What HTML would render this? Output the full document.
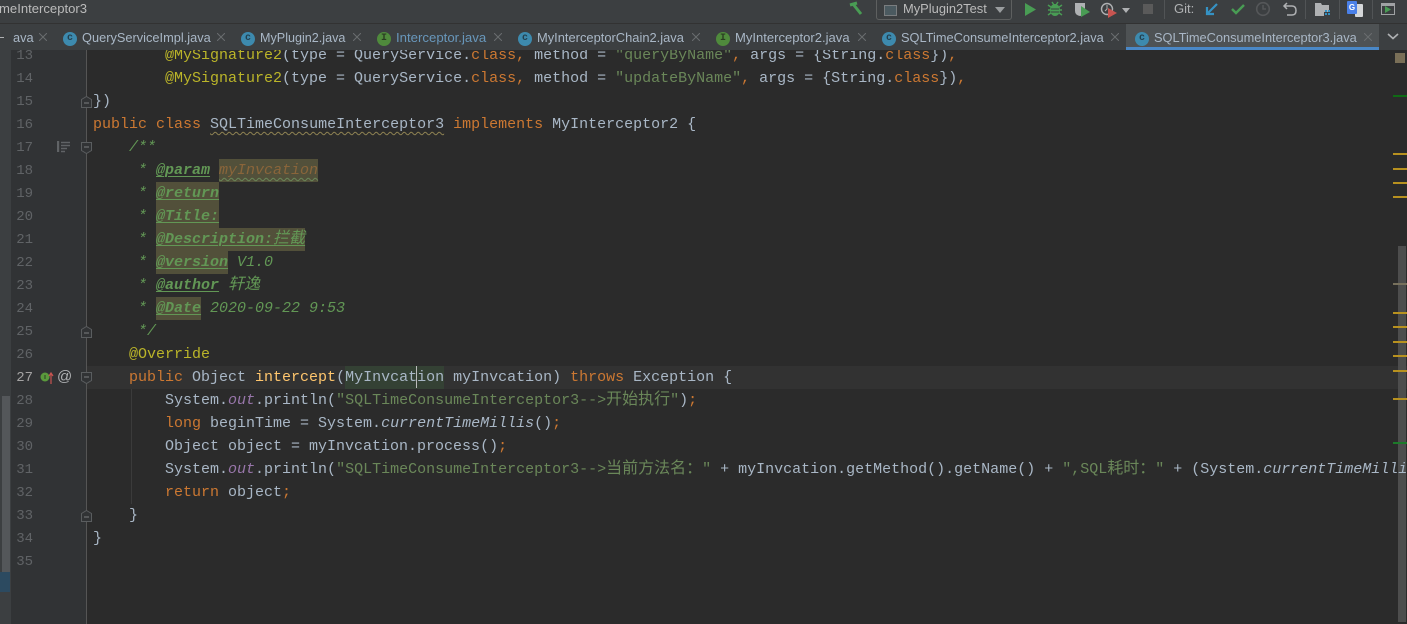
<!DOCTYPE html>
<html><head><meta charset="utf-8"><style>
html,body{margin:0;padding:0;width:1407px;height:624px;overflow:hidden;background:#2b2b2b}
body{position:relative}
.a{position:absolute}
#top{left:0;top:0;width:1407px;height:23px;background:#3c3f41;border-bottom:1px solid #323232}
#tabs{left:0;top:24px;width:1407px;height:26px;background:#3c3f41;z-index:5}
.t{position:absolute;top:5px;font:12.8px/18px "Liberation Sans",sans-serif;color:#a9b7c6;white-space:nowrap}
.ic{position:absolute;top:8px;width:14px;height:14px;border-radius:50%;background:#3d8aae;color:#23404f;font:bold 10px/13px "Liberation Mono",monospace;text-align:center}
.ic.i{background:#4f8a3c;color:#2b3d22}
.x{position:absolute;top:9px;width:8px;height:8px}
#ed{left:0;top:0;width:1407px;height:624px;overflow:hidden;z-index:1}
.l{position:absolute;left:93px;height:23px;white-space:pre;font:15px/23px "Liberation Mono",monospace;color:#a9b7c6}
.n{position:absolute;left:13px;margin-top:1px;width:20px;text-align:right;height:23px;font:14px/23px "Liberation Mono",monospace;color:#606366}
.k{color:#cc7832}.s{color:#6a8759}.an{color:#bbb529}.m{color:#ffc66d}
.d{color:#629755;font-style:italic}
.tag{font-weight:bold;text-decoration:underline;text-underline-offset:2px;text-decoration-thickness:1px}
.hl{background:#52503a;display:inline-block;height:23px;vertical-align:top}
.f{color:#9876aa;font-style:italic}.it{font-style:italic}
.c{font-family:"Noto Sans CJK SC","Liberation Sans",sans-serif;font-size:16px;line-height:0;font-weight:normal}
.w{text-decoration:underline wavy #6a8759 1px;text-underline-offset:3px}
.w2{text-decoration:underline wavy #8f8352 1px;text-underline-offset:3px}
.mk{position:absolute;left:1393px;width:14px;height:2px;background:#b8911f;z-index:4}
svg{position:absolute}
svg.fo{left:81px;z-index:3}
</style></head><body>
<div class="a" id="top">
<div class="a" style="left:-1px;top:0;font:13.1px/18px 'Liberation Sans',sans-serif;color:#bbb">meInterceptor3</div>
<svg style="left:848px;top:1px" width="18" height="16" viewBox="0 0 18 16"><path d="M2 4 L9 2 M5 3 L13 13" stroke="#499c54" stroke-width="3" fill="none"/></svg>
<div class="a" style="left:876px;top:-2px;width:134px;height:20px;border:1px solid #5e6060;border-radius:3px"></div>
<div class="a" style="left:884px;top:5px;width:11px;height:9px;border:1px solid #7a7d7f;background:#4b5a60"></div>
<div class="a" style="left:903px;top:0;font:12.9px/18px 'Liberation Sans',sans-serif;color:#bbb">MyPlugin2Test</div>
<div class="a" style="left:995px;top:7px;border:5px solid transparent;border-top:6px solid #9a9d9f"></div>
<svg style="left:1023px;top:2px" width="16" height="15"><path d="M2 1 L13 7.500 L2 14Z" fill="#499c54"/></svg>
<svg style="left:1047px;top:1px" width="16" height="16"><ellipse cx="8" cy="9" rx="5" ry="6" fill="#499c54"/><path d="M1 4 L15 14 M15 4 L1 14 M1 9H15 M5 1 L7 4 M11 1 L9 4" stroke="#499c54" stroke-width="1.4"/><path d="M4 8H12M4 11H12" stroke="#3c3f41"/></svg>
<svg style="left:1074px;top:2px" width="17" height="16"><path d="M1 1H11V9Q11 13 6 14Q1 13 1 9Z" fill="#afb1b3"/><path d="M7 4 L16 10 L7 15Z" fill="#499c54"/></svg>
<svg style="left:1100px;top:2px" width="18" height="16"><circle cx="7" cy="7" r="5.500" fill="none" stroke="#afb1b3" stroke-width="1.4"/><path d="M7 3V7L5 9" stroke="#afb1b3" fill="none"/><path d="M8 6 L17 11 L8 16Z" fill="#c75450"/></svg>
<div class="a" style="left:1122px;top:8px;border:4px solid transparent;border-top:5px solid #afb1b3"></div>
<div class="a" style="left:1143px;top:4px;width:10px;height:10px;background:#5a5a5a"></div>
<div class="a" style="left:1164px;top:0;width:1px;height:19px;background:#515456"></div>
<div class="a" style="left:1174px;top:0;font:13px/18px 'Liberation Sans',sans-serif;color:#afb1b3">Git:</div>
<svg style="left:1204px;top:2px" width="15" height="15"><path d="M13 2 L3 12 M3 5V12H10" stroke="#3592c4" stroke-width="2.200" fill="none"/></svg>
<svg style="left:1230px;top:3px" width="16" height="13"><path d="M2 6 L6 10 L14 2" stroke="#499c54" stroke-width="2.400" fill="none"/></svg>
<svg style="left:1255px;top:1px" width="16" height="16"><circle cx="8" cy="8" r="6.300" fill="none" stroke="#555759" stroke-width="1.600"/><path d="M8 4V8H11" stroke="#555759" fill="none" stroke-width="1.400"/></svg>
<svg style="left:1282px;top:2px" width="16" height="15"><path d="M5 1 L2 4 L5 7 M2 4H10Q14 4 14 8.500Q14 13 10 13H5" stroke="#afb1b3" stroke-width="1.500" fill="none"/></svg>
<div class="a" style="left:1305px;top:0;width:1px;height:19px;background:#515456"></div>
<svg style="left:1315px;top:3px" width="16" height="14"><path d="M0 0H6L7 2H14V9H9V13H0Z" fill="#afb1b3"/><path d="M10 7h2v2h-2zM13 7h2v2h-2zM10 10h2v2h-2zM13 10h2v2h-2z" fill="#3592c4"/></svg>
<div class="a" style="left:1339px;top:0;width:1px;height:19px;background:#515456"></div>
<div class="a" style="left:1355px;top:4px;width:8px;height:13px;background:#d5d7d9;border-radius:1px"></div>
<div class="a" style="left:1347px;top:1px;width:10px;height:13px;background:#4a80e8;border-radius:1px;color:#fff;font:bold 8px/13px 'Liberation Sans',sans-serif;text-align:center">G</div>
<div class="a" style="left:1372px;top:0;width:1px;height:19px;background:#515456"></div>
<div class="a" style="left:1381px;top:3px;width:12px;height:8px;border:1px solid #a0a2a4;border-top-width:3px"></div>
<svg style="left:1385px;top:6px" width="8" height="8"><path d="M0 0L6 3.500L0 7Z" fill="#499c54"/></svg>
</div>
<div class="a" id="tabs">
<div class="a" style="left:0;top:13px;width:4px;height:1px;background:#afb1b3"></div>
<div class="t" style="left:13px">ava</div>
<svg class="x" style="left:39px"><path d="M0 0L8 8M8 0L0 8" stroke="#6a6d6f"/></svg>
<div class="ic" style="left:63px">c</div><div class="t" style="left:82px">QueryServiceImpl.java</div>
<svg class="x" style="left:217px"><path d="M0 0L8 8M8 0L0 8" stroke="#6a6d6f"/></svg>
<div class="ic" style="left:241px">c</div><div class="t" style="left:260px;font-size:12.600px">MyPlugin2.java</div>
<svg class="x" style="left:353px"><path d="M0 0L8 8M8 0L0 8" stroke="#6a6d6f"/></svg>
<div class="ic i" style="left:377px">I</div><div class="t" style="left:396px;color:#6897bb;font-size:13.200px">Interceptor.java</div>
<svg class="x" style="left:494px"><path d="M0 0L8 8M8 0L0 8" stroke="#6a6d6f"/></svg>
<div class="ic" style="left:518px">c</div><div class="t" style="left:537px;font-size:12.900px">MyInterceptorChain2.java</div>
<svg class="x" style="left:692px"><path d="M0 0L8 8M8 0L0 8" stroke="#6a6d6f"/></svg>
<div class="ic i" style="left:716px">I</div><div class="t" style="left:735px;font-size:13.050px">MyInterceptor2.java</div>
<svg class="x" style="left:858px"><path d="M0 0L8 8M8 0L0 8" stroke="#6a6d6f"/></svg>
<div class="ic" style="left:882px">c</div><div class="t" style="left:901px">SQLTimeConsumeInterceptor2.java</div>
<svg class="x" style="left:1111px"><path d="M0 0L8 8M8 0L0 8" stroke="#6a6d6f"/></svg>
<div class="a" style="left:1126px;top:0;width:253px;height:26px;background:#4e5254"></div>
<div class="a" style="left:1126px;top:23px;width:253px;height:3px;background:#4a88c7"></div>
<div class="ic" style="left:1135px">c</div><div class="t" style="left:1154px;">SQLTimeConsumeInterceptor3.java</div>
<svg class="x" style="left:1364px"><path d="M0 0L8 8M8 0L0 8" stroke="#6a6d6f"/></svg>
<svg style="left:1386px;top:8px" width="14" height="9"><path d="M2 2L7 6.500L12 2" stroke="#afb1b3" stroke-width="1.600" fill="none"/></svg>
</div>
<div class="a" style="left:0;top:50px;width:86px;height:574px;background:#313335"></div>
<div class="a" style="left:0;top:50px;width:11px;height:574px;background:#3c3f41"></div>
<div class="a" style="left:2px;top:396px;width:8px;height:196px;background:#54575a"></div>
<div class="a" style="left:0;top:572px;width:10px;height:20px;background:#2c4a60"></div>
<div class="a" style="left:86px;top:50px;width:1px;height:574px;background:#555"></div>
<div class="a" style="left:87px;top:366px;width:1320px;height:23px;background:#323232"></div>
<div class="a" style="left:345px;top:366px;width:99px;height:23px;background:#344134"></div>
<div class="a" style="left:416px;top:366px;width:1px;height:22px;background:#bbb;z-index:3"></div>
<div class="a" style="left:131px;top:389px;width:1px;height:115px;background:#3b3b3b"></div>
<div class="a" style="left:1398px;top:246px;width:8px;height:376px;background:#4d4d4d;z-index:0"></div>
<div class="a" id="ed">
<div class="n" style="top:44px">13</div><div class="l" style="top:44px">        <span class="an">@MySignature2</span>(type = QueryService.<span class="k">class</span><span class="k">,</span> method = <span class="s">"queryByName"</span><span class="k">,</span> args = {String.<span class="k">class</span>})<span class="k">,</span></div>
<div class="n" style="top:67px">14</div><div class="l" style="top:67px">        <span class="an">@MySignature2</span>(type = QueryService.<span class="k">class</span><span class="k">,</span> method = <span class="s">"updateByName"</span><span class="k">,</span> args = {String.<span class="k">class</span>})<span class="k">,</span></div>
<div class="n" style="top:90px">15</div><div class="l" style="top:90px">})</div>
<div class="n" style="top:113px">16</div><div class="l" style="top:113px"><span class="k">public class</span> <span class="w2">SQLTimeConsumeInterceptor3</span> <span class="k">implements</span> MyInterceptor2 {</div>
<div class="n" style="top:136px">17</div><div class="l d" style="top:136px">    /**</div>
<div class="n" style="top:159px">18</div><div class="l d" style="top:159px">     * <span class="tag">@param</span> <span class="hl" style="color:#8a653a"><span class="w">myInvcation</span></span></div>
<div class="n" style="top:182px">19</div><div class="l d" style="top:182px">     * <span class="tag hl">@return</span></div>
<div class="n" style="top:205px">20</div><div class="l d" style="top:205px">     * <span class="tag hl">@Title:</span></div>
<div class="n" style="top:228px">21</div><div class="l d" style="top:228px">     * <span class="tag hl">@Description:<span class="c">拦截</span></span></div>
<div class="n" style="top:251px">22</div><div class="l d" style="top:251px">     * <span class="tag hl">@version</span> V1.0</div>
<div class="n" style="top:274px">23</div><div class="l d" style="top:274px">     * <span class="tag">@author</span> <span class="c">轩逸</span></div>
<div class="n" style="top:297px">24</div><div class="l d" style="top:297px">     * <span class="tag hl">@Date</span> 2020-09-22 9:53</div>
<div class="n" style="top:320px">25</div><div class="l d" style="top:320px">     */</div>
<div class="n" style="top:343px">26</div><div class="l an" style="top:343px">    @Override</div>
<div class="n" style="top:366px;color:#a4a3a3">27</div><div class="l" style="top:366px">    <span class="k">public</span> Object <span class="m">intercept</span>(MyInvcation myInvcation) <span class="k">throws</span> Exception {</div>
<div class="n" style="top:389px">28</div><div class="l" style="top:389px">        System.<span class="f">out</span>.println(<span class="s">"SQLTimeConsumeInterceptor3--&gt;<span class="c">开始执行</span>"</span>)<span class="k">;</span></div>
<div class="n" style="top:412px">29</div><div class="l" style="top:412px">        <span class="k">long</span> beginTime = System.<span class="it">currentTimeMillis</span>()<span class="k">;</span></div>
<div class="n" style="top:435px">30</div><div class="l" style="top:435px">        Object object = myInvcation.process()<span class="k">;</span></div>
<div class="n" style="top:458px">31</div><div class="l" style="top:458px">        System.<span class="f">out</span>.println(<span class="s">"SQLTimeConsumeInterceptor3--&gt;<span class="c">当前方法名：</span>"</span> + myInvcation.getMethod().getName() + <span class="s">",SQL<span class="c">耗时：</span>"</span> + (System.<span class="it">currentTimeMilli</span></div>
<div class="n" style="top:481px">32</div><div class="l" style="top:481px">        <span class="k">return</span> object<span class="k">;</span></div>
<div class="n" style="top:504px">33</div><div class="l" style="top:504px">    }</div>
<div class="n" style="top:527px">34</div><div class="l" style="top:527px">}</div>
<div class="n" style="top:550px">35</div>
</div>
<svg class="fo" style="top:96px" width="11" height="12"><path d="M.5 11.500V3.500L5.500 .5L10.500 3.500V11.500Z" fill="#313335" stroke="#5a5d5f"/><path d="M3 7H8" stroke="#7a7d7f"/></svg>
<svg class="fo" style="top:142px" width="11" height="12"><path d="M.5 .5V8.500L5.500 11.500L10.500 8.500V.5Z" fill="#313335" stroke="#5a5d5f"/><path d="M3 5H8" stroke="#7a7d7f"/></svg>
<svg class="fo" style="top:326px" width="11" height="12"><path d="M.5 11.500V3.500L5.500 .5L10.500 3.500V11.500Z" fill="#313335" stroke="#5a5d5f"/><path d="M3 7H8" stroke="#7a7d7f"/></svg>
<svg class="fo" style="top:372px" width="11" height="12"><path d="M.5 .5V8.500L5.500 11.500L10.500 8.500V.5Z" fill="#313335" stroke="#5a5d5f"/><path d="M3 5H8" stroke="#7a7d7f"/></svg>
<svg class="fo" style="top:510px" width="11" height="12"><path d="M.5 11.500V3.500L5.500 .5L10.500 3.500V11.500Z" fill="#313335" stroke="#5a5d5f"/><path d="M3 7H8" stroke="#7a7d7f"/></svg>
<svg style="left:57px;top:141px;z-index:3" width="14" height="12"><path d="M1 0V11" stroke="#606366" stroke-width="2.400"/><path d="M4 1.500H13M4 4.500H13M4 7.500H10M4 10.500H8" stroke="#606366" stroke-width="1.600"/></svg>
<svg style="left:40px;top:371px;z-index:3" width="14" height="14"><circle cx="5" cy="6" r="4.500" fill="#5a9a3c"/><path d="M5 4V8" stroke="#2b3d22"/><path d="M11 13V3M9 5L11 2L13 5" stroke="#c75450" stroke-width="1.200" fill="none"/></svg>
<div class="a" style="left:57px;top:368px;font:15px/18px 'Liberation Sans',sans-serif;color:#afb1b3;z-index:3">@</div>
<div class="a" style="left:1395px;top:53px;width:10px;height:10px;background:#7a6f57;z-index:3"></div>
<div class="mk" style="top:95px;background:#0f6b14"></div>
<div class="mk" style="top:153px"></div><div class="mk" style="top:168px"></div><div class="mk" style="top:182px"></div><div class="mk" style="top:196px"></div>
<div class="mk" style="top:283px;background:#77705c"></div>
<div class="mk" style="top:312px"></div><div class="mk" style="top:326px"></div><div class="mk" style="top:341px"></div><div class="mk" style="top:355px"></div><div class="mk" style="top:370px"></div><div class="mk" style="top:398px"></div>
<div class="mk" style="top:442px;background:#1d7a2a"></div>
</body></html>
